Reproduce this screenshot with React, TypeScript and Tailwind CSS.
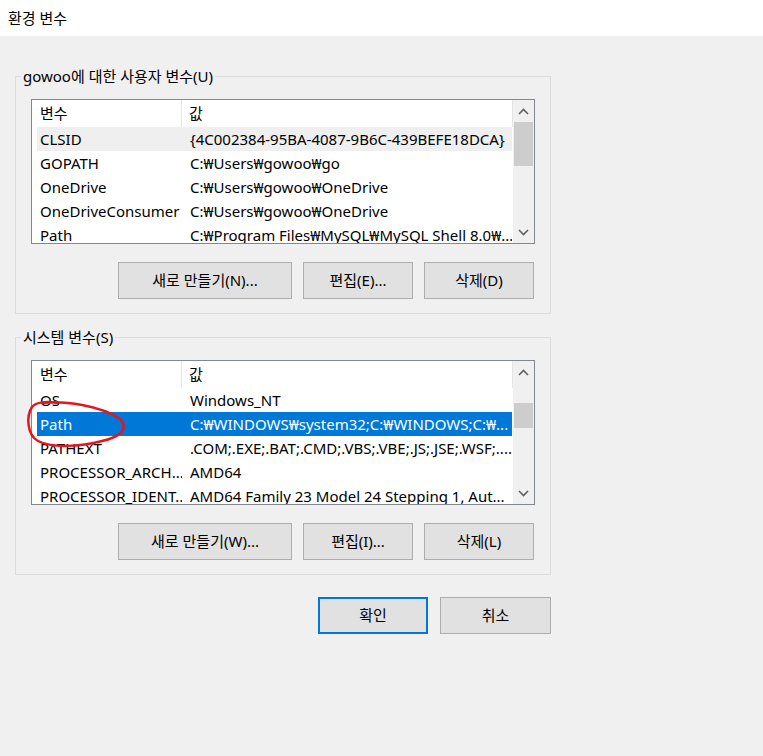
import React from "react";

type Row = { name: string; value: string; state?: "hover" | "selected" };

const userRows: Row[] = [
  { name: "CLSID", value: "{4C002384-95BA-4087-9B6C-439BEFE18DCA}", state: "hover" },
  { name: "GOPATH", value: "C:₩Users₩gowoo₩go" },
  { name: "OneDrive", value: "C:₩Users₩gowoo₩OneDrive" },
  { name: "OneDriveConsumer", value: "C:₩Users₩gowoo₩OneDrive" },
  { name: "Path", value: "C:₩Program Files₩MySQL₩MySQL Shell 8.0₩..." },
];

const systemRows: Row[] = [
  { name: "OS", value: "Windows_NT" },
  { name: "Path", value: "C:₩WINDOWS₩system32;C:₩WINDOWS;C:₩...", state: "selected" },
  { name: "PATHEXT", value: ".COM;.EXE;.BAT;.CMD;.VBS;.VBE;.JS;.JSE;.WSF;...." },
  { name: "PROCESSOR_ARCH...", value: "AMD64" },
  { name: "PROCESSOR_IDENT...", value: "AMD64 Family 23 Model 24 Stepping 1, Aut..." },
];

const font = {
  fontFamily: '"Segoe UI", "Noto Sans", "Noto Sans CJK KR", sans-serif',
};

function Chevron({ dir }: { dir: "up" | "down" }) {
  return (
    <svg width="11" height="7" viewBox="0 0 11 7" className="block">
      <path
        d={dir === "up" ? "M1 6 L5.5 1.5 L10 6" : "M1 1 L5.5 5.5 L10 1"}
        fill="none"
        stroke="#606060"
        strokeWidth="1.6"
      />
    </svg>
  );
}

function ScrollBar({ thumbTop, thumbHeight }: { thumbTop: number; thumbHeight: number }) {
  return (
    <div className="w-[21px] shrink-0 bg-[#f0f0f0] flex flex-col">
      <div className="h-[22px] flex items-center justify-center">
        <Chevron dir="up" />
      </div>
      <div className="flex-1 px-[1px] flex flex-col">
        <div style={{ height: thumbTop }} />
        <div className="bg-[#cdcdcd]" style={{ height: thumbHeight }} />
      </div>
      <div className="h-[22px] flex items-center justify-center">
        <Chevron dir="down" />
      </div>
    </div>
  );
}

function ListView({ rows, thumbTop, thumbHeight }: { rows: Row[]; thumbTop: number; thumbHeight: number }) {
  return (
    <div className="w-[504px] h-[145px] border border-[#828790] bg-white flex">
      <div className="flex-1 flex flex-col overflow-hidden">
        <div className="h-[27px] shrink-0 flex items-center text-[15px] text-black">
          <div className="w-[150px] h-full pl-[8px] flex items-center border-r border-[#e5e5e5]">변수</div>
          <div className="flex-1 h-full pl-[7px] flex items-center border-r border-[#e5e5e5]">값</div>
        </div>
        <div className="flex-1 overflow-hidden">
          {rows.map((r) => (
            <div
              key={r.name}
              className={
                "ml-[5px] mr-[1px] h-[24px] flex items-center text-[15px] whitespace-nowrap " +
                (r.state === "selected"
                  ? "bg-[#0078d7] text-white"
                  : r.state === "hover"
                  ? "bg-[#efefef] text-black"
                  : "text-black")
              }
            >
              <div className="w-[145px] pl-[3px] overflow-hidden">{r.name}</div>
              <div className="flex-1 pl-[8px] overflow-hidden">{r.value}</div>
            </div>
          ))}
        </div>
      </div>
      <ScrollBar thumbTop={thumbTop} thumbHeight={thumbHeight} />
    </div>
  );
}

function Button({ label, width, primary }: { label: string; width: string; primary?: boolean }) {
  return (
    <button
      className={
        "h-[37px] bg-[#e1e1e1] text-[15px] text-black flex items-center justify-center " +
        width +
        (primary ? " border-2 border-[#0078d7]" : " border border-[#adadad]")
      }
    >
      {label}
    </button>
  );
}

function GroupBox({
  title,
  rows,
  thumbTop,
  thumbHeight,
  buttons,
}: {
  title: string;
  rows: Row[];
  thumbTop: number;
  thumbHeight: number;
  buttons: [string, string, string];
}) {
  return (
    <fieldset className="w-[536px] border border-[#dcdcdc] px-[15px] pt-[13px] pb-[14px] m-0 min-w-0">
      <legend className="ml-[-10px] px-[2px] text-[15px] leading-[20px] text-black">{title}</legend>
      <ListView rows={rows} thumbTop={thumbTop} thumbHeight={thumbHeight} />
      <div className="mt-[18px] mr-[1px] flex justify-end gap-[11px]">
        <Button label={buttons[0]} width="w-[174px]" />
        <Button label={buttons[1]} width="w-[110px]" />
        <Button label={buttons[2]} width="w-[110px]" />
      </div>
    </fieldset>
  );
}

export default function App() {
  return (
    <div className="relative w-[763px] h-[756px] bg-[#f0f0f0] overflow-hidden" style={font}>
      <div className="h-[36px] bg-white flex items-center pl-[8px] text-[15px] text-black">환경 변수</div>
      <div className="pl-[15px] pt-[30px] flex flex-col">
        <GroupBox
          title="gowoo에 대한 사용자 변수(U)"
          rows={userRows}
          thumbTop={0}
          thumbHeight={44}
          buttons={["새로 만들기(N)...", "편집(E)...", "삭제(D)"]}
        />
        <div className="h-[13px]" />
        <GroupBox
          title="시스템 변수(S)"
          rows={systemRows}
          thumbTop={20}
          thumbHeight={25}
          buttons={["새로 만들기(W)...", "편집(I)...", "삭제(L)"]}
        />
        <div className="w-[536px] mt-[22px] flex justify-end gap-[12px]">
          <Button label="확인" width="w-[110px]" primary />
          <Button label="취소" width="w-[111px]" />
        </div>
      </div>
      {/* hand-drawn marker around the Path entry */}
      <svg className="absolute left-0 top-0 pointer-events-none" width="763" height="756">
        <path
          d="M42 403 C63 400, 102 406, 120 419 C129 428, 121 437, 102 441 C80 447, 51 448, 38 441 C27 435, 26 416, 32 407 C36 402, 47 401, 57 403"
          fill="none"
          stroke="#e8141b"
          strokeWidth="2.5"
          strokeLinecap="round"
        />
      </svg>
    </div>
  );
}
